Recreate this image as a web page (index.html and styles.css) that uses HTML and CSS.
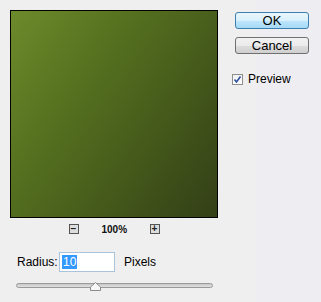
FILE: index.html
```html
<!DOCTYPE html>
<html lang="en">
<head>
    <meta charset="UTF-8">
    <title>Gaussian Blur</title>
    <link rel="stylesheet" href="styles.css">
</head>
<body>
    <div class="dialog">
        <div class="main">
            <div class="preview"></div>
            <div class="zoom-row">
                <div class="zoom-btn">&minus;</div>
                <div class="zoom-value">100%</div>
                <div class="zoom-btn">+</div>
            </div>
            <div class="radius-row">
                <label class="radius-label" for="radius">Radius:</label>
                <div class="radius-input"><span class="selected">10</span></div>
                <span class="unit">Pixels</span>
            </div>
            <div class="slider">
                <div class="track"></div>
                <svg class="thumb" width="11" height="9" viewBox="0 0 11 9">
                    <path d="M0.5 8.5 L0.5 5 L5.5 0.5 L10.5 5 L10.5 8.5 Z" fill="#f7f7f7" stroke="#8a8a8a"/>
                </svg>
            </div>
        </div>
        <div class="side">
            <div class="btn btn-ok">OK</div>
            <div class="btn btn-cancel">Cancel</div>
            <div class="check-row">
                <div class="checkbox">
                    <svg width="9" height="9" viewBox="0 0 9 9">
                        <path d="M1.5 4.5 L3.5 7 L7.5 1.5" fill="none" stroke="#2d4f9e" stroke-width="1.6"/>
                    </svg>
                </div>
                <span>Preview</span>
            </div>
        </div>
    </div>
</body>
</html>
```

FILE: styles.css
```css
* {
    margin: 0;
    padding: 0;
    box-sizing: border-box;
    font-family: 'Liberation Sans', Arial, sans-serif;
}

body {
    width: 321px;
    height: 302px;
    background: linear-gradient(to right, #efefef 257px, #eeedf2 257px);
    color: #000;
    font-size: 12px;
}

.dialog {
    display: flex;
}

.main {
    width: 218px;
    padding: 10px 0 0 10px;
}

.preview {
    width: 208px;
    height: 208px;
    border: 1px solid #000;
    background: linear-gradient(125deg, #6c8b2b 0%, #55701f 35%, #42561a 70%, #333f17 100%);
}

.zoom-row {
    width: 208px;
    margin-top: 6px;
    height: 10px;
    display: flex;
    justify-content: center;
    align-items: center;
    gap: 23px;
}

.zoom-btn {
    width: 10px;
    height: 10px;
    border: 1px solid #555;
    background: #ddd;
    font-size: 10px;
    line-height: 8px;
    text-align: center;
    font-weight: bold;
    color: #222;
}

.zoom-value {
    font-size: 10px;
    font-weight: bold;
    width: 25px;
    text-align: center;
    color: #111;
}

.radius-row {
    display: flex;
    align-items: center;
    margin-top: 18px;
    padding-left: 7px;
    height: 20px;
}

.radius-label {
    width: 42px;
    font-size: 12px;
}

.radius-input {
    width: 56px;
    height: 20px;
    border: 1px solid #a9c3dc;
    background: #fff;
    padding: 2px 0 0 2px;
}

.selected {
    display: inline-block;
    background: #3399ff;
    color: #fff;
    line-height: 14px;
    padding: 0 1px;
}

.unit {
    margin-left: 9px;
}

.slider {
    position: relative;
    width: 197px;
    margin: 11px 0 0 6px;
    height: 12px;
}

.track {
    margin-top: 2px;
    height: 5px;
    border: 1px solid #9a9a9a;
    border-radius: 3px;
    background: linear-gradient(#c8c8c8, #e0e0e0);
}

.thumb {
    position: absolute;
    left: 74px;
    top: -1px;
}

.side {
    padding: 12px 0 0 17px;
}

.btn {
    width: 74px;
    height: 17px;
    border-radius: 3px;
    text-align: center;
    line-height: 15px;
    font-size: 13px;
}

.btn-ok {
    border: 1px solid #3c7fb1;
    background: linear-gradient(#eaf6fd 0%, #d9f0fc 50%, #bee6fd 51%, #a7d9f5 100%);
}

.btn-cancel {
    margin-top: 8px;
    border: 1px solid #707070;
    background: linear-gradient(#f2f2f2 0%, #ebebeb 50%, #dddddd 51%, #cfcfcf 100%);
}

.check-row {
    display: flex;
    align-items: center;
    margin: 18px 0 0 -3px;
    gap: 5px;
}

.checkbox {
    width: 11px;
    height: 11px;
    border: 1px solid #8e8f8f;
    background: linear-gradient(#f0f0f0, #fff);
    display: flex;
    align-items: center;
    justify-content: center;
}

.checkbox svg {
    display: block;
}
```
